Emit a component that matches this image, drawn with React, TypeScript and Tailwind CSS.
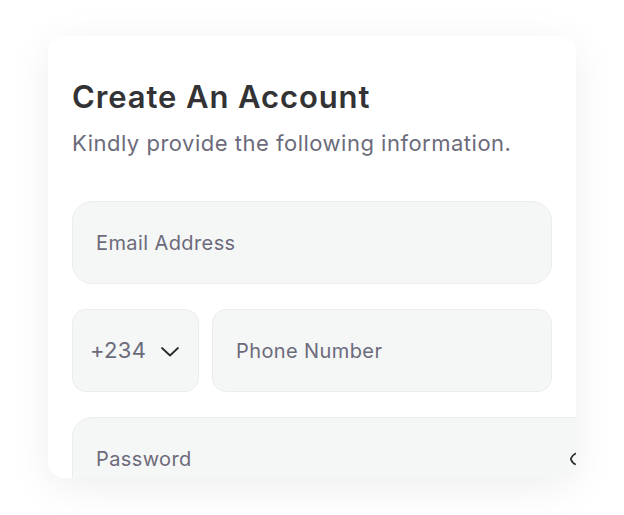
import { Eye } from "lucide-react";

export default function App() {
  return (
    <div className="h-[515px] w-[624px] bg-white pl-[48px] pt-[36px]">
      <div className="h-[442px] w-[528px] overflow-hidden rounded-2xl bg-white shadow-[0_8px_40px_rgba(0,0,0,0.07)]">
        <div className="w-[580px] pl-[24px] pt-[43px]">
          <h1 className="font-['Inter',sans-serif] text-[31px] font-semibold leading-[36px] tracking-[0.9px] text-[#333336]">
            Create An Account
          </h1>
          <p className="mt-[13px] font-['Inter',sans-serif] text-[22px] leading-[30px] tracking-[0.5px] text-[#6c6b7b]">
            Kindly provide the following information.
          </p>

          <div className="mt-[43px] flex h-[83px] w-[480px] items-center rounded-[20px] border border-[#ebecec] bg-[#f5f6f6] px-[23px]">
            <span className="font-['Inter',sans-serif] text-[20px] tracking-[0.4px] text-[#6c6b7b]">
              Email Address
            </span>
          </div>

          <div className="mt-[25px] flex w-[480px] gap-[13px]">
            <div className="flex h-[83px] w-[127px] items-center gap-[14px] rounded-[14px] border border-[#ebecec] bg-[#f5f6f6] pl-[17px]">
              <span className="font-['Inter',sans-serif] text-[22px] tracking-[0.3px] text-[#6c6b7b]">
                +234
              </span>
              <svg width="20" height="11" viewBox="0 0 20 11" fill="none" className="mt-[2px]">
                <path d="M2 2 L10 9.5 L18 2" stroke="#2b2b2e" strokeWidth="1.8" strokeLinecap="round" strokeLinejoin="round" />
              </svg>
            </div>
            <div className="flex h-[83px] flex-1 items-center rounded-[14px] border border-[#ebecec] bg-[#f5f6f6] px-[23px]">
              <span className="font-['Inter',sans-serif] text-[20px] tracking-[0.4px] text-[#6c6b7b]">
                Phone Number
              </span>
            </div>
          </div>

          <div className="mt-[25px] flex h-[83px] w-[530px] items-center justify-between rounded-[20px] border border-[#ebecec] bg-[#f5f6f6] pl-[23px] pr-[10px]">
            <span className="font-['Inter',sans-serif] text-[20px] tracking-[0.4px] text-[#6c6b7b]">
              Password
            </span>
            <Eye className="h-[22px] w-[22px] text-[#2b2b2e]" strokeWidth={1.8} />
          </div>
        </div>
      </div>
    </div>
  );
}
